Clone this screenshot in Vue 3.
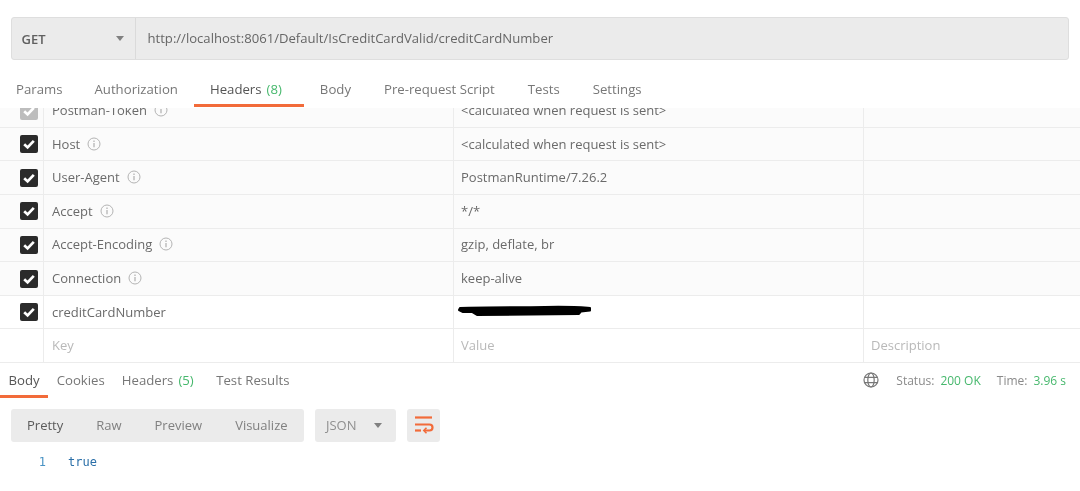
<script setup>
const rows = [
  { key: 'Postman-Token', value: '<calculated when request is sent>', info: true, muted: true },
  { key: 'Host', value: '<calculated when request is sent>', info: true },
  { key: 'User-Agent', value: 'PostmanRuntime/7.26.2', info: true },
  { key: 'Accept', value: '*/*', info: true },
  { key: 'Accept-Encoding', value: 'gzip, deflate, br', info: true },
  { key: 'Connection', value: 'keep-alive', info: true },
  { key: 'creditCardNumber', value: '', redacted: true }
]
const reqTabs = [
  { label: 'Params' },
  { label: 'Authorization' },
  { label: 'Headers', count: '(8)', active: true },
  { label: 'Body' },
  { label: 'Pre-request Script' },
  { label: 'Tests' },
  { label: 'Settings' }
]
const resTabs = [
  { label: 'Body', active: true },
  { label: 'Cookies' },
  { label: 'Headers', count: '(5)' },
  { label: 'Test Results' }
]
</script>

<template>
  <div class="page">
    <div class="urlbar">
      <div class="method">
        <span>GET</span>
        <i class="caret"></i>
      </div>
      <div class="url">http://localhost:8061/Default/IsCreditCardValid/creditCardNumber</div>
    </div>

    <nav class="req-tabs">
      <div v-for="t in reqTabs" :key="t.label" class="req-tab" :class="{ active: t.active }">
        {{ t.label }}<span v-if="t.count" class="count">{{ t.count }}</span>
      </div>
    </nav>

    <div class="table">
      <div v-for="r in rows" :key="r.key" class="row" :class="{ muted: r.muted }">
        <div class="c-check">
          <span class="box">
            <svg viewBox="0 0 18 18" width="18" height="18">
              <path d="M4.2 9.2 7.6 12.4 13.8 5.8" fill="none" stroke="#fff" stroke-width="2.7" />
            </svg>
          </span>
        </div>
        <div class="c-key">
          <span>{{ r.key }}</span>
          <svg v-if="r.info" class="info" viewBox="0 0 14 14" width="14" height="14">
            <circle cx="7" cy="7" r="6" fill="none" stroke="#b4b4b4" />
            <path d="M7 6v4.2M7 3.6v1.3" stroke="#a8a8a8" stroke-width="1.1" fill="none" />
          </svg>
        </div>
        <div class="c-val">
          <svg v-if="r.redacted" class="scribble" viewBox="0 0 136 14" width="136" height="14">
            <path d="M3 4 C30 3 60 3.5 88 3 S120 3 133 4 L133 6.5 L124 7.5 L122 10 L20 11 L15 8 L6 8 L2 6 Z" fill="#000" stroke="#000" stroke-width="2" stroke-linejoin="round" />
          </svg>
          <template v-else>{{ r.value }}</template>
        </div>
        <div class="c-desc"></div>
      </div>
      <div class="row ghost">
        <div class="c-check"></div>
        <div class="c-key">Key</div>
        <div class="c-val">Value</div>
        <div class="c-desc">Description</div>
      </div>
    </div>

    <div class="res-bar">
      <nav class="res-tabs">
        <div v-for="t in resTabs" :key="t.label" class="res-tab" :class="{ active: t.active }">
          {{ t.label }}<span v-if="t.count" class="count">{{ t.count }}</span>
        </div>
      </nav>
      <div class="status">
        <svg class="globe" viewBox="0 0 16 16" width="16" height="16">
          <g fill="none" stroke="#777" stroke-width="1.2">
            <circle cx="8" cy="8" r="7" />
            <ellipse cx="8" cy="8" rx="3.2" ry="7" />
            <path d="M1.6 5.4h12.8M1.6 10.6h12.8" />
          </g>
        </svg>
        <span class="s-label">Status:</span><span class="s-val s-first">200 OK</span>
        <span class="s-label s-time">Time:</span><span class="s-val">3.96 s</span>
      </div>
    </div>

    <div class="toolbar">
      <div class="seg">
        <span class="seg-item on">Pretty</span>
        <span class="seg-item">Raw</span>
        <span class="seg-item">Preview</span>
        <span class="seg-item">Visualize</span>
      </div>
      <div class="fmt">
        <span>JSON</span>
        <i class="caret"></i>
      </div>
      <div class="wrap">
        <svg viewBox="0 0 20 20" width="20" height="20">
          <g fill="none" stroke="#f26b3a" stroke-width="2.2">
            <path d="M1 2.5h17" />
            <path d="M1 9.5h14.5a2.8 2.8 0 0 1 0 6H10" />
            <path d="M1 15.5h6" />
            <path d="M12.5 12.8 9.8 15.5l2.7 2.7" stroke-width="1.6" />
          </g>
        </svg>
      </div>
    </div>

    <div class="code">
      <span class="ln">1</span><span class="tok">true</span>
    </div>
  </div>
</template>

<style scoped>
.page {
  width: 1080px;
  height: 491px;
  overflow: hidden;
  background: #fff;
  font-family: "Open Sans", sans-serif;
  font-size: 13px;
  color: #6b6b6b;
  padding-top: 17px;
  box-sizing: border-box;
  filter: blur(0.45px);
}
.urlbar {
  display: flex;
  margin: 0 11px 0 10.5px;
  height: 43px;
  box-sizing: border-box;
  background: #ebebeb;
  border: 1px solid #dedede;
  border-radius: 3px;
}
.method {
  width: 124.5px;
  flex: none;
  box-sizing: border-box;
  padding: 0 11px 0 10px;
  display: flex;
  align-items: center;
  justify-content: space-between;
  border-right: 1px solid #dadada;
  font-weight: 600;
  color: #606060;
}
.caret {
  width: 0;
  height: 0;
  border: 4px solid transparent;
  border-top: 5px solid #808080;
  border-bottom: 0;
}
.url {
  padding-left: 11.5px;
  line-height: 41px;
  font-size: 13.1px;
  color: #666;
}
.req-tabs {
  display: flex;
  height: 48px;
  padding-left: 0;
  font-size: 13.2px;
}
.req-tab {
  padding: 0 16px;
  line-height: 59px;
  height: 47px;
  box-sizing: border-box;
  color: #777;
}
.req-tab:nth-child(n+4) {
  padding: 0 16.5px;
}
.req-tab:nth-child(4) {
  padding-left: 16px;
}
.req-tab.active {
  color: #555;
  padding-right: 22px;
  border-bottom: 3px solid #f26b3a;
}
.count {
  color: #47b86d;
  margin-left: 5px;
}
.table {
  height: 255px;
  overflow: hidden;
  display: flex;
  flex-direction: column;
  justify-content: flex-end;
}
.row {
  flex: none;
  height: 33.6px;
  box-sizing: border-box;
  display: grid;
  grid-template-columns: 44px 410px 410px 1fr;
  border-bottom: 1px solid #ececec;
  align-items: stretch;
  background: #fff;
  color: #6a6a6a;
}
.row:nth-child(-n+6) {
  background: #fbfbfb;
}
.row > div {
  display: flex;
  align-items: center;
  box-sizing: border-box;
  padding-left: 8px;
  padding-bottom: 1px;
  border-right: 1px solid #ececec;
}
.row > .c-desc {
  border-right: 0;
  padding-left: 7px;
}
.row > .c-val {
  padding-left: 8px;
  margin-left: -1px;
}
.row > .c-check {
  padding-left: 20px;
  padding-bottom: 0;
}
.box {
  width: 18px;
  height: 18px;
  border-radius: 2px;
  background: #2b2b2b;
  display: block;
}
.box svg {
  display: block;
}
.muted .box {
  background: #bdbdbd;
}
.info {
  margin-left: 7px;
}
.row.ghost {
  color: #b9b9b9;
}
.scribble {
  margin-left: -4px;
  margin-top: -2px;
}
.res-bar {
  display: flex;
  justify-content: space-between;
  height: 34.5px;
}
.res-tabs {
  display: flex;
  font-size: 13.2px;
}
.res-tab {
  padding: 0 8.5px;
  line-height: 34px;
  height: 35px;
  box-sizing: border-box;
  color: #777;
}
.res-tab:nth-child(3) {
  padding-right: 14px;
}
.res-tab.active {
  color: #555;
  border-bottom: 3px solid #f26b3a;
}
.status {
  display: flex;
  align-items: center;
  padding-right: 14px;
  font-size: 12px;
  color: #8a8a8a;
}
.globe {
  margin-right: 17px;
}
.s-val {
  color: #47b86d;
  margin-left: 6px;
}
.s-time {
  margin-left: 16px;
}
.toolbar {
  display: flex;
  margin: 11px 0 0 11px;
  height: 33px;
}
.seg {
  display: flex;
  align-items: center;
  background: #ebebeb;
  border-radius: 3px;
  width: 293px;
  box-sizing: border-box;
  padding-left: 16px;
}
.seg-item {
  margin-right: 33px;
  color: #808080;
}
.seg-item.on {
  color: #5a5a5a;
}
.fmt {
  margin-left: 11px;
  width: 81px;
  box-sizing: border-box;
  background: #ebebeb;
  border-radius: 3px;
  padding: 0 14px 0 11px;
  display: flex;
  align-items: center;
  justify-content: space-between;
  color: #8f8f8f;
}
.wrap {
  margin-left: 11px;
  width: 33px;
  background: #ebebeb;
  border-radius: 3px;
  display: flex;
  align-items: center;
  justify-content: center;
}
.code {
  margin-top: 12px;
  font-family: "DejaVu Sans Mono", monospace;
  font-size: 12px;
  line-height: 16px;
  display: flex;
}
.ln {
  width: 46px;
  flex: none;
  text-align: right;
  color: #4a93c4;
}
.tok {
  margin-left: 22px;
  color: #2a6fa8;
}
</style>
